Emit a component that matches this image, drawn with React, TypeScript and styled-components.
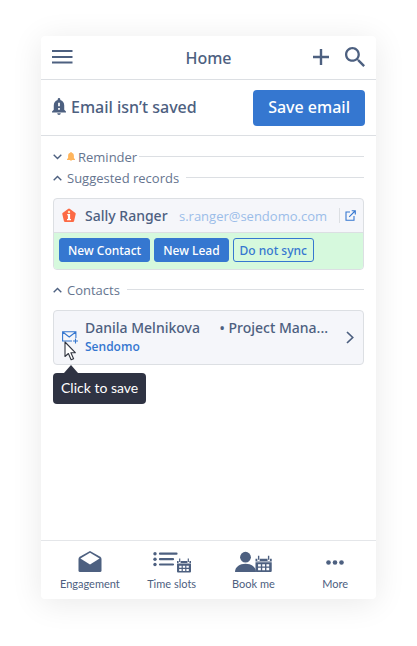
import React from "react";
import styled, { createGlobalStyle } from "styled-components";

const ink = "#4d6080";
const blue = "#3577d0";
const line = "#dcdfe3";
const strongFont = `"Noto Sans", "Open Sans", sans-serif`;

const GlobalStyle = createGlobalStyle`
  * { box-sizing: border-box; }
  body { margin: 0; background: #fff; color: ${ink}; font-family: "Open Sans", sans-serif; }
  button { font-family: inherit; cursor: pointer; }
  h1, h2, p { margin: 0; }
  svg { display: block; flex: none; }
`;

const Page = styled.div`
  display: flex;
  min-height: 100vh;
  padding: 36px 41px 47px;
`;

const Panel = styled.div`
  display: flex;
  flex: 1;
  min-width: 0;
  flex-direction: column;
  background: #fff;
  border-radius: 4px;
  box-shadow: 0 4px 32px rgba(0, 0, 0, 0.09);
`;

const Header = styled.header`
  display: grid;
  grid-template-columns: 1fr auto 1fr;
  align-items: center;
  height: 44px;
  padding: 0 11px;
  border-bottom: 1px solid ${line};
`;

const Title = styled.h1`
  font-family: ${strongFont};
  font-size: 16px;
  line-height: 22px;
  font-weight: 500;
`;

const Actions = styled.div<{ $end?: boolean }>`
  display: flex;
  align-items: center;
  gap: 16px;
  padding-bottom: 2px;
  justify-content: ${(p) => (p.$end ? "flex-end" : "flex-start")};
`;

const IconButton = styled.button`
  position: relative;
  display: flex;
  padding: 0;
  border: 0;
  background: none;
  color: inherit;
`;

const Banner = styled.section`
  display: flex;
  align-items: center;
  gap: 5px;
  height: 56px;
  padding: 0 11px;
  border-bottom: 1px solid ${line};
`;

const BannerText = styled.p`
  flex: 1;
  padding-bottom: 2px;
  font-family: ${strongFont};
  font-size: 16px;
  line-height: 22px;
  font-weight: 500;
`;

const BellIcon = styled.svg`
  margin-bottom: 2px;
`;

const SaveButton = styled.button`
  height: 36px;
  padding: 0 15px 2px;
  border: 0;
  border-radius: 4px;
  background: ${blue};
  color: #fff;
  font-family: ${strongFont};
  font-size: 16px;
  font-weight: 500;
`;

const Main = styled.main`
  display: flex;
  flex: 1;
  flex-direction: column;
  padding: 10px 12px;
`;

const SectionHeading = styled.h2`
  font-size: 13px;
  line-height: 20px;
  font-weight: 400;
`;

const SectionToggle = styled.button<{ $tight?: boolean }>`
  display: flex;
  align-items: center;
  width: 100%;
  height: 21px;
  padding: 0;
  border: 0;
  background: none;
  color: #66758f;
  font-size: 13px;
  line-height: 20px;

  &::after {
    content: "";
    flex: 1;
    height: 1px;
    margin-left: ${(p) => (p.$tight ? 2 : 7)}px;
    background: ${line};
  }
`;

const SectionLabel = styled.span`
  display: flex;
  align-items: center;
  gap: 3px;
  margin-left: 5px;
`;

const Card = styled.article`
  margin: 10px 0 9px;
  border: 1px solid ${line};
  border-radius: 4px;
  background: #f5f6fa;
`;

const RecordRow = styled.div`
  display: flex;
  align-items: center;
  height: 34px;
  padding: 0 7px 0 8px;
  border-bottom: 1px solid ${line};
`;

const Name = styled.strong`
  font-family: ${strongFont};
  font-size: 14px;
  line-height: 20px;
  font-weight: 500;
  white-space: nowrap;
`;

const RecordName = styled(Name)`
  flex: 1;
  margin-left: 9px;
`;

const Email = styled.a`
  color: #9bbde9;
  font-size: 13px;
  line-height: 20px;
  text-decoration: none;
`;

const OpenLink = styled.a`
  margin-left: 12px;
  padding: 2px 0 2px 5px;
  border-left: 1px solid ${line};
  color: ${blue};
`;

const RecordActions = styled.div`
  display: flex;
  gap: 4px;
  padding: 5px;
  height: 36px;
  border-radius: 0 0 3px 3px;
  background: #d6f9dd;
`;

const SmallButton = styled.button<{ $outline?: boolean }>`
  height: 24px;
  padding: 1px ${(p) => (p.$outline ? 6 : 8)}px 0;
  border: 1px solid ${blue};
  border-radius: 3px;
  background: ${(p) => (p.$outline ? "transparent" : blue)};
  color: ${(p) => (p.$outline ? blue : "#fff")};
  font-family: ${strongFont};
  font-size: 12px;
  line-height: 20px;
  font-weight: 500;
  white-space: nowrap;
`;

const ContactCard = styled(Card)`
  display: flex;
  align-items: center;
  height: 55px;
  padding: 0 9px 0 8px;
`;

const ContactInfo = styled.div`
  flex: 1;
  min-width: 0;
  margin-left: 7px;
  padding-bottom: 2px;
`;

const ContactLine = styled.div`
  display: flex;
  justify-content: space-between;
  padding-right: 18px;
`;

const Company = styled.a`
  display: block;
  color: ${blue};
  font-size: 12px;
  line-height: 18px;
  font-weight: 600;
  text-decoration: none;
`;

const Pointer = styled.svg`
  position: absolute;
  left: 2px;
  top: 10px;
`;

const Tooltip = styled.span`
  position: absolute;
  left: -9px;
  top: 42px;
  padding: 5px 8px 6px;
  border-radius: 4px;
  background: #2f3343;
  color: #fff;
  font-family: Lato, sans-serif;
  font-size: 14px;
  line-height: 20px;
  white-space: nowrap;

  &::before {
    content: "";
    position: absolute;
    left: 11px;
    bottom: 100%;
    border: solid transparent;
    border-width: 0 7px 8px;
    border-bottom-color: #2f3343;
  }
`;

const TabBar = styled.nav`
  display: grid;
  grid-template-columns: repeat(4, 1fr);
  padding: 10px 0 6px 8px;
  border-top: 1px solid #e4e6e9;
`;

const Tab = styled.button`
  display: flex;
  flex-direction: column;
  align-items: center;
  gap: 2px;
  padding: 0;
  border: 0;
  background: none;
  color: ${ink};
  font-family: Lato, sans-serif;
  font-size: 11px;
  line-height: 18px;
`;

const Chevron = ({ down }: { down?: boolean }) => (
  <svg width="9" height="6" viewBox="0 0 9 6" fill="none" stroke={ink} strokeWidth="1.4">
    <path d={down ? "M.7.8 4.5 4.6 8.3.8" : "M.7 5.2 4.5 1.4 8.3 5.2"} />
  </svg>
);

const Calendar = () => (
  <>
    <path fill="currentColor" d="M0 2.5h1.6v2h2V2.5h6.8v2h2V2.5H14V5H0zM0 5.6h14V13a1 1 0 0 1-1 1H1a1 1 0 0 1-1-1z" />
    <path stroke="currentColor" strokeWidth="1.2" d="M2.7 0v3.4M11.3 0v3.4" />
    <path fill="#fff" d="M2.2 7.2h2.4v2H2.2zm3.6 0h2.4v2H5.8zm3.6 0h2.4v2H9.4zM2.2 10.4h2.4v2H2.2zm3.6 0h2.4v2H5.8zm3.6 0h2.4v2H9.4z" />
  </>
);

const tabs = [
  {
    label: "Engagement",
    icon: (
      <svg width="24" height="22" viewBox="0 0 24 22">
        <path fill="currentColor" d="M12 0 22.3 5.8Q23.5 6.6 23.5 8v11.5a1.5 1.5 0 0 1-1.5 1.5H2a1.5 1.5 0 0 1-1.5-1.5V8Q.5 6.6 1.7 5.8z" />
        <path fill="#fff" d="M12 1.8 21.6 7.5 12 13.5 2.4 7.5z" />
      </svg>
    ),
  },
  {
    label: "Time slots",
    icon: (
      <svg width="50" height="22" viewBox="0 0 50 22">
        <g fill="currentColor">
          <circle cx="8" cy="2.700" r="1.700" />
          <circle cx="8" cy="8.200" r="1.700" />
          <circle cx="8" cy="13.500" r="1.700" />
        </g>
        <path stroke="currentColor" strokeWidth="2.200" strokeLinecap="round" d="M13 2.700h16.500M13 8.200h13M13 13.500h13" />
        <g transform="translate(30 7.500)"><Calendar /></g>
      </svg>
    ),
  },
  {
    label: "Book me",
    icon: (
      <svg width="38" height="22" viewBox="0 0 38 22">
        <g fill="currentColor">
          <circle cx="11.500" cy="6.200" r="5.400" />
          <path d="M1 21c0-5 4.700-8.200 10.500-8.200S22 16 22 21z" />
        </g>
        <g transform="translate(21.500 4.800) scale(1.160 1.160)"><Calendar /></g>
      </svg>
    ),
  },
  {
    label: "More",
    icon: (
      <svg width="18" height="22" viewBox="0 0 18 22" fill="currentColor">
        <circle cx="2.500" cy="11.500" r="2.300" />
        <circle cx="9" cy="11.500" r="2.300" />
        <circle cx="15.500" cy="11.500" r="2.300" />
      </svg>
    ),
  },
];

export default function App() {
  return (
    <>
      <GlobalStyle />
      <Page>
        <Panel>
          <Header>
            <Actions>
              <IconButton aria-label="Menu">
                <svg width="21" height="16" viewBox="0 0 21 16" stroke="currentColor" strokeWidth="2.200">
                  <path d="M0 2h20.500M0 8h20.500M0 13.500h20.500" />
                </svg>
              </IconButton>
            </Actions>
            <Title>Home</Title>
            <Actions $end>
              <IconButton aria-label="Add">
                <svg width="16" height="16" viewBox="0 0 16 16" stroke="currentColor" strokeWidth="2.400">
                  <path d="M8 0v16M0 8h16" />
                </svg>
              </IconButton>
              <IconButton aria-label="Search">
                <svg width="20" height="20" viewBox="3 3 17.500 17.500" fill="currentColor">
                  <path d="M15.500 14h-.79l-.28-.27C15.410 12.590 16 11.110 16 9.500 16 5.910 13.090 3 9.500 3S3 5.910 3 9.500 5.910 16 9.500 16c1.610 0 3.090-.59 4.230-1.570l.27.28v.79l5 4.990L20.490 19l-4.990-5zm-6 0C7.010 14 5 11.990 5 9.500S7.010 5 9.500 5 14 7.010 14 9.500 11.990 14 9.500 14z" />
                </svg>
              </IconButton>
            </Actions>
          </Header>

          <Banner>
            <BellIcon width="14" height="17" viewBox="4 2.500 16 19.500" fill="currentColor">
              <path d="M18 16v-5c0-3.070-1.640-5.640-4.500-6.320V4c0-.83-.67-1.500-1.500-1.500s-1.500.67-1.500 1.500v.68C7.630 5.360 6 7.920 6 11v5l-2 2v1h16v-1l-2-2zm-5 0h-2v-2h2v2zm0-4h-2V8h2v4zm-1 10c1.100 0 2-.9 2-2h-4c0 1.100.89 2 2 2z" />
            </BellIcon>
            <BannerText>Email isn’t saved</BannerText>
            <SaveButton>Save email</SaveButton>
          </Banner>

          <Main>
            <SectionHeading>
              <SectionToggle $tight aria-expanded="false">
                <Chevron down />
                <SectionLabel>
                  <svg width="8" height="9" viewBox="0 0 8 9" fill="#ffb55c">
                    <path d="M4 0c.5 0 .8.3.8.8C6.200 1.200 6.900 2.300 6.900 3.800V6L8 7.300V8H0v-.7L1.100 6V3.800C1.100 2.300 1.800 1.200 3.200.8 3.200.3 3.500 0 4 0zM3 8.300h2Q4.800 9 4 9t-1-.7z" />
                  </svg>
                  Reminder
                </SectionLabel>
              </SectionToggle>
            </SectionHeading>
            <SectionHeading>
              <SectionToggle aria-expanded="true">
                <Chevron />
                <SectionLabel>Suggested records</SectionLabel>
              </SectionToggle>
            </SectionHeading>
            <Card>
              <RecordRow>
                <svg width="14" height="15" viewBox="0 0 14 15">
                  <path fill="#fc6a45" d="M7 .5Q7.500.5 8 .9l5.400 4.200q.5.400.3 1l-1.600 7q-.2 1-1.200 1H3.100q-1 0-1.200-1l-1.600-7q-.2-.6.300-1L6 .9Q6.500.5 7 .5z" />
                  <circle cx="7" cy="4" r="1.200" fill="#ffe8bd" />
                  <path fill="#fff" d="M5.200 6h2.900v5h.9v1.300H5V11h.9V7.200h-.7z" />
                </svg>
                <RecordName>Sally Ranger</RecordName>
                <Email href="mailto:s.ranger@sendomo.com">s.ranger@sendomo.com</Email>
                <OpenLink href="#record" aria-label="Open record">
                  <svg width="11" height="11" viewBox="0 0 11 11" fill="none" stroke="currentColor" strokeWidth="1.100">
                    <path d="M5 2H1v8.300h8V6M6.700.8h3.600v3.600M10 1 4.200 6.800" />
                  </svg>
                </OpenLink>
              </RecordRow>
              <RecordActions>
                <SmallButton>New Contact</SmallButton>
                <SmallButton>New Lead</SmallButton>
                <SmallButton $outline>Do not sync</SmallButton>
              </RecordActions>
            </Card>

            <SectionHeading>
              <SectionToggle aria-expanded="true">
                <Chevron />
                <SectionLabel>Contacts</SectionLabel>
              </SectionToggle>
            </SectionHeading>
            <ContactCard>
              <IconButton aria-describedby="save-tip" aria-label="Save email to contact">
                <svg width="16" height="13" viewBox="0 0 16 13" fill="none" stroke={blue} strokeWidth="1.100">
                  <path d="M10 10H.6V.7h13.300V7M.8 1l6.400 5L13.700 1M13.500 7.500v5M11 10h5" />
                </svg>
                <Pointer width="12" height="20" viewBox="0 0 12 20">
                  <path fill="#fff" stroke="#30343f" strokeWidth="1.100" strokeLinejoin="round" d="M1 1v14.500l3.400-3 2.700 6.300 2.500-1.100-2.700-6h4.400z" />
                </Pointer>
                <Tooltip id="save-tip" role="tooltip">Click to save</Tooltip>
              </IconButton>
              <ContactInfo>
                <ContactLine>
                  <Name>Danila Melnikova</Name>
                  <Name>• Project Mana...</Name>
                </ContactLine>
                <Company href="#sendomo">Sendomo</Company>
              </ContactInfo>
              <IconButton aria-label="Open contact">
                <svg width="8" height="13" viewBox="0 0 8 13" fill="none" stroke="currentColor" strokeWidth="1.700">
                  <path d="M1 1l5.700 5.500L1 12" />
                </svg>
              </IconButton>
            </ContactCard>
          </Main>

          <TabBar>
            {tabs.map((tab) => (
              <Tab key={tab.label}>
                {tab.icon}
                {tab.label}
              </Tab>
            ))}
          </TabBar>
        </Panel>
      </Page>
    </>
  );
}
